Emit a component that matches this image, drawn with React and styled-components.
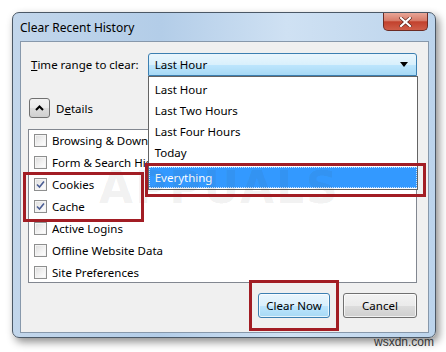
import React from "react";
import styled, { createGlobalStyle } from "styled-components";

const GlobalStyle = createGlobalStyle`
  body {
    margin: 0;
    background: #ffffff;
    font-family: "Noto Sans", "Open Sans", sans-serif;
    font-size: 11.5px;
    color: #000;
  }
`;

const Page = styled.div`
  position: relative;
  width: 446px;
  height: 352px;
  padding: 12px 0 0 12px;
  box-sizing: border-box;
  overflow: hidden;
`;

const Window = styled.div`
  width: 424px;
  box-sizing: border-box;
  border: 1px solid #4b5866;
  border-radius: 7px;
  padding: 0 6px 4px 7px;
  background: linear-gradient(
    90deg,
    #c2d6eb 0%,
    #b3cde8 35%,
    #cfe1f3 65%,
    #bcd4ec 100%
  );
  box-shadow: 3px 4px 9px rgba(0, 0, 0, 0.45);
`;

const TitleBar = styled.div`
  height: 28px;
  display: flex;
  justify-content: space-between;
  align-items: flex-start;
`;

const Title = styled.div`
  margin-top: 6px;
  font-size: 12px;
  color: #000;
`;

const CloseButton = styled.div`
  width: 45px;
  height: 18px;
  margin-right: 1px;
  box-sizing: border-box;
  border: 1px solid #6b2b24;
  border-top: none;
  border-radius: 0 0 5px 5px;
  background: linear-gradient(
    180deg,
    #e8a697 0%,
    #d77b69 45%,
    #c2412d 52%,
    #cf5e49 100%
  );
  display: flex;
  align-items: center;
  justify-content: center;
`;

const Content = styled.div`
  position: relative;
  background: #f0f0f0;
  border: 1px solid #8798ab;
  padding: 11px 11px 14px 7px;
`;

const RangeRow = styled.div`
  display: flex;
  align-items: center;
  padding-left: 3px;
`;

const Label = styled.div`
  width: 117px;
`;

const SelectWrap = styled.div`
  position: relative;
  width: 270px;
`;

const Select = styled.div`
  height: 23px;
  box-sizing: border-box;
  border: 1px solid #3c7fb1;
  border-radius: 3px 3px 0 0;
  background: linear-gradient(180deg, #eaf6fd 0%, #d9f0fc 50%, #bee6fd 51%, #a7d9f5 100%);
  display: flex;
  align-items: center;
  justify-content: space-between;
  padding: 0 8px 0 6px;
`;

const DropList = styled.div`
  position: absolute;
  top: 23px;
  left: 0;
  width: 270px;
  box-sizing: border-box;
  border: 1px solid #646464;
  background: #ffffff;
  padding: 2px 0 1px;
  z-index: 2;
`;

const DropItem = styled.div`
  height: 21px;
  padding-left: ${(p) => (p.$selected ? "5px" : "6px")};
  margin-top: ${(p) => (p.$selected ? "4px" : "0")};
  box-sizing: border-box;
  background: ${(p) => (p.$selected ? "#3399ff" : "transparent")};
  color: ${(p) => (p.$selected ? "#ffffff" : "#000")};
  border: ${(p) => (p.$selected ? "1px dotted #c9e3ff" : "none")};
  line-height: ${(p) => (p.$selected ? "19px" : "21px")};
`;

const RedBox = styled.div`
  position: absolute;
  border: 3px solid #a21d24;
  box-sizing: border-box;
  pointer-events: none;
  z-index: 5;
`;

const DetailsRow = styled.div`
  display: flex;
  align-items: center;
  gap: 6px;
  margin-top: 22px;
  padding-left: 1px;
`;

const ToggleButton = styled.div`
  width: 21px;
  height: 20px;
  box-sizing: border-box;
  border: 1px solid #707070;
  border-radius: 3px;
  background: linear-gradient(180deg, #f2f2f2 0%, #ebebeb 50%, #dddddd 51%, #cfcfcf 100%);
  display: flex;
  align-items: center;
  justify-content: center;
`;

const ListBox = styled.div`
  position: relative;
  margin-top: 11px;
  height: 154px;
  box-sizing: border-box;
  border: 1px solid #828790;
  background: #ffffff;
  width: 389px;
`;

const CheckRow = styled.div`
  height: 22px;
  display: flex;
  align-items: center;
  gap: 5px;
  padding-left: 5px;
  margin-top: ${(p) => (p.$first ? "-1px" : "0")};
`;

const Box = styled.div`
  width: 13px;
  height: 13px;
  box-sizing: border-box;
  border: 1px solid #8e8f8f;
  background: linear-gradient(135deg, #dcdcdc 0%, #f4f4f4 60%, #ffffff 100%);
  box-shadow: inset 0 0 0 1px #f4f4f4;
  display: flex;
  align-items: center;
  justify-content: center;
`;

const ButtonRow = styled.div`
  display: flex;
  justify-content: flex-end;
  gap: 13px;
  margin-top: 10px;
`;

const ButtonSlot = styled.div`
  position: relative;
`;

const Button = styled.div`
  width: ${(p) => p.$w}px;
  height: 25px;
  box-sizing: border-box;
  border: 1px solid ${(p) => (p.$default ? "#3c7fb1" : "#707070")};
  border-radius: 3px;
  background: ${(p) =>
    p.$default
      ? "linear-gradient(180deg, #eaf6fd 0%, #d9f0fc 50%, #bee6fd 51%, #a7d9f5 100%)"
      : "linear-gradient(180deg, #f2f2f2 0%, #ebebeb 50%, #dddddd 51%, #cfcfcf 100%)"};
  box-shadow: inset 0 0 0 1px rgba(255, 255, 255, 0.7);
  display: flex;
  align-items: center;
  justify-content: center;
`;

const Watermark = styled.div`
  position: absolute;
  left: 78px;
  top: 120px;
  font-family: "DejaVu Sans", sans-serif;
  font-weight: bold;
  font-size: 44px;
  letter-spacing: 2px;
  color: rgba(60, 60, 60, 0.08);
  pointer-events: none;
  z-index: 4;
`;

const Credit = styled.div`
  position: absolute;
  right: 12px;
  bottom: 3px;
  font-family: "Liberation Sans", sans-serif;
  font-size: 12px;
  color: #333;
`;

const ranges = ["Last Hour", "Last Two Hours", "Last Four Hours", "Today"];

const items = [
  { name: "Browsing & Download History", checked: false },
  { name: "Form & Search History", checked: false },
  { name: "Cookies", checked: true },
  { name: "Cache", checked: true },
  { name: "Active Logins", checked: false },
  { name: "Offline Website Data", checked: false },
  { name: "Site Preferences", checked: false },
];

const Check = () => (
  <svg width="9" height="9" viewBox="0 0 9 9">
    <path d="M1 4.5 L3.5 7 L8 1.5" fill="none" stroke="#4a5d94" strokeWidth="1.6" />
  </svg>
);

const App = () => {
  return (
    <>
      <GlobalStyle />
      <Page>
        <Window>
          <TitleBar>
            <Title>Clear Recent History</Title>
            <CloseButton>
              <svg width="13" height="10" viewBox="0 0 13 10">
                <path
                  d="M2 1 L11 9 M11 1 L2 9"
                  stroke="#5a2018"
                  strokeWidth="3.4"
                  strokeLinecap="square"
                />
                <path
                  d="M2 1 L11 9 M11 1 L2 9"
                  stroke="#ffffff"
                  strokeWidth="2.2"
                  strokeLinecap="square"
                />
              </svg>
            </CloseButton>
          </TitleBar>
          <Content>
            <RangeRow>
              <Label>
                <u>T</u>ime range to clear:
              </Label>
              <SelectWrap>
                <Select>
                  <span>Last Hour</span>
                  <svg width="8" height="5" viewBox="0 0 8 5">
                    <path d="M0 0 L8 0 L4 5 Z" fill="#000" />
                  </svg>
                </Select>
                <DropList>
                  {ranges.map((r) => (
                    <DropItem key={r}>{r}</DropItem>
                  ))}
                  <DropItem $selected>Everything</DropItem>
                </DropList>
                <RedBox style={{ left: -3, top: 110, width: 281, height: 34 }} />
              </SelectWrap>
            </RangeRow>

            <DetailsRow>
              <ToggleButton>
                <svg width="9" height="6" viewBox="0 0 9 6">
                  <path d="M1 5 L4.5 1.5 L8 5" fill="none" stroke="#000" strokeWidth="2" />
                </svg>
              </ToggleButton>
              <span>
                D<u>e</u>tails
              </span>
            </DetailsRow>

            <ListBox>
              {items.map((it, i) => (
                <CheckRow key={it.name} $first={i === 0}>
                  <Box>{it.checked && <Check />}</Box>
                  <span>{it.name}</span>
                </CheckRow>
              ))}
              <RedBox style={{ left: -6, top: 42, width: 121, height: 50 }} />
            </ListBox>

            <ButtonRow>
              <ButtonSlot>
                <Button $w={72} $default>
                  Clear Now
                </Button>
                <RedBox style={{ left: -9, top: -13, width: 90, height: 51 }} />
              </ButtonSlot>
              <Button $w={74}>Cancel</Button>
            </ButtonRow>
            <Watermark>APPUALS</Watermark>
          </Content>
        </Window>
        <Credit>wsxdn.com</Credit>
      </Page>
    </>
  );
};

export default App;
